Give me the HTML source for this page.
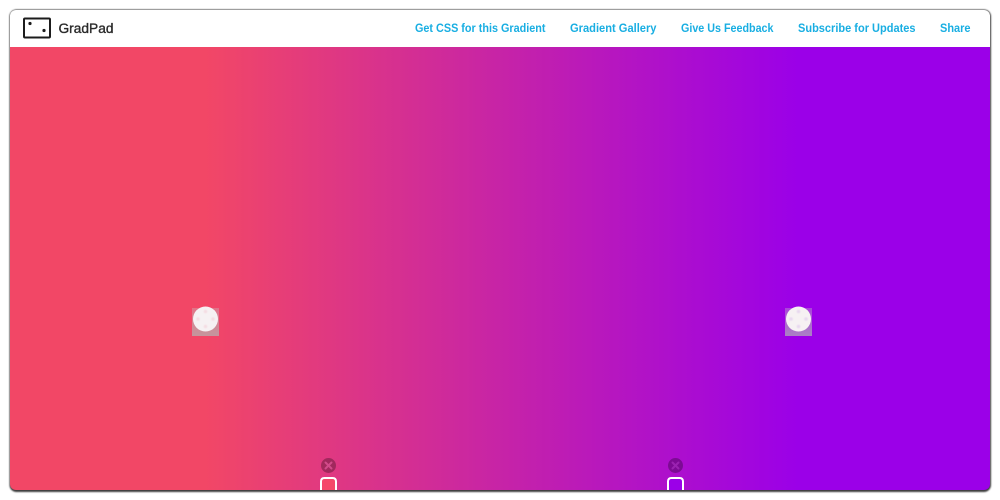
<!DOCTYPE html>
<html>
<head>
<meta charset="utf-8">
<style>
html,body{margin:0;padding:0;width:1000px;height:500px;background:#fff;overflow:hidden}
svg{display:block}
text{font-family:"Liberation Sans",sans-serif;font-weight:700}
</style>
</head>
<body>
<svg width="1000" height="500" viewBox="0 0 1000 500" xmlns="http://www.w3.org/2000/svg">
<defs>
<linearGradient id="g" gradientUnits="userSpaceOnUse" x1="205" y1="0" x2="798" y2="0">
<stop offset="0" stop-color="#f24766"/>
<stop offset="1" stop-color="#9b00e8"/>
</linearGradient>
<linearGradient id="s" x1="0" y1="0" x2="0" y2="1">
<stop offset="0" stop-color="#c4c4c4" stop-opacity=".35"/>
<stop offset="1" stop-color="#b0b8b4" stop-opacity=".7"/>
</linearGradient>
<filter id="b" x="-5%" y="-5%" width="110%" height="110%"><feGaussianBlur stdDeviation="0.9"/></filter>
<filter id="k" x="-30%" y="-30%" width="160%" height="160%"><feGaussianBlur stdDeviation="0.5"/></filter>
<clipPath id="c"><rect x="10" y="10" width="980" height="480" rx="6"/></clipPath>
</defs>
<rect x="9.500" y="9.500" width="981.500" height="482.500" rx="7" fill="#3c3c3c" filter="url(#b)"/>
<g clip-path="url(#c)">
<rect x="10" y="10" width="980" height="37" fill="#fff"/>
<rect x="10" y="47" width="980" height="443" fill="url(#g)"/>

<rect x="192" y="308" width="27" height="28" fill="url(#s)"/>
<circle cx="205.500" cy="319" r="12.500" fill="#f6f1f3"/>
<g fill="#f4dde3" filter="url(#k)"><circle cx="205.500" cy="311.500" r="1.800"/><circle cx="205.500" cy="326.500" r="1.800"/><circle cx="198" cy="319" r="1.800"/><circle cx="213" cy="319" r="1.800"/></g>

<rect x="785" y="308" width="27" height="28" fill="url(#s)"/>
<circle cx="798.500" cy="319" r="12.500" fill="#f6f1f3"/>
<g fill="#e8d8ef" filter="url(#k)"><circle cx="798.500" cy="311.500" r="1.800"/><circle cx="798.500" cy="326.500" r="1.800"/><circle cx="791" cy="319" r="1.800"/><circle cx="806" cy="319" r="1.800"/></g>

<circle cx="328.500" cy="465.500" r="7.500" fill="#000" fill-opacity=".28"/>
<path d="M325.500 462.500l6 6m0-6l-6 6" stroke="#d24a8a" stroke-width="2" stroke-linecap="round"/>
<path d="M321 491v-9.500q0-3.500 3.500-3.500h8q3.500 0 3.500 3.500v9.500" fill="#f5476a" stroke="#fff" stroke-width="2"/>

<circle cx="675.500" cy="465.500" r="7.500" fill="#000" fill-opacity=".28"/>
<path d="M672.500 462.500l6 6m0-6l-6 6" stroke="#9a22b0" stroke-width="2" stroke-linecap="round"/>
<path d="M668 491v-9.500q0-3.500 3.500-3.500h8q3.500 0 3.500 3.500v9.500" fill="#9b00e8" stroke="#fff" stroke-width="2"/>
</g>

<rect x="24" y="18.500" width="26" height="19" rx="1" fill="none" stroke="#1c1c1c" stroke-width="2"/>
<circle cx="30" cy="23.500" r="1.600" fill="#1c1c1c"/>
<circle cx="44" cy="30.500" r="1.600" fill="#1c1c1c"/>
<text x="58.500" y="33" font-size="13.500" fill="#2a2a2a" textLength="55" lengthAdjust="spacingAndGlyphs" style="font-weight:400;stroke:#2a2a2a;stroke-width:.35px">GradPad</text>

<g font-size="11.500" fill="#18aee2">
<text x="415" y="32" textLength="130.500" lengthAdjust="spacingAndGlyphs">Get CSS for this Gradient</text>
<text x="570" y="32" textLength="86.500" lengthAdjust="spacingAndGlyphs">Gradient Gallery</text>
<text x="681" y="32" textLength="92.500" lengthAdjust="spacingAndGlyphs">Give Us Feedback</text>
<text x="798" y="32" textLength="117.500" lengthAdjust="spacingAndGlyphs">Subscribe for Updates</text>
<text x="940" y="32" textLength="30.500" lengthAdjust="spacingAndGlyphs">Share</text>
</g>
</svg>
</body>
</html>
